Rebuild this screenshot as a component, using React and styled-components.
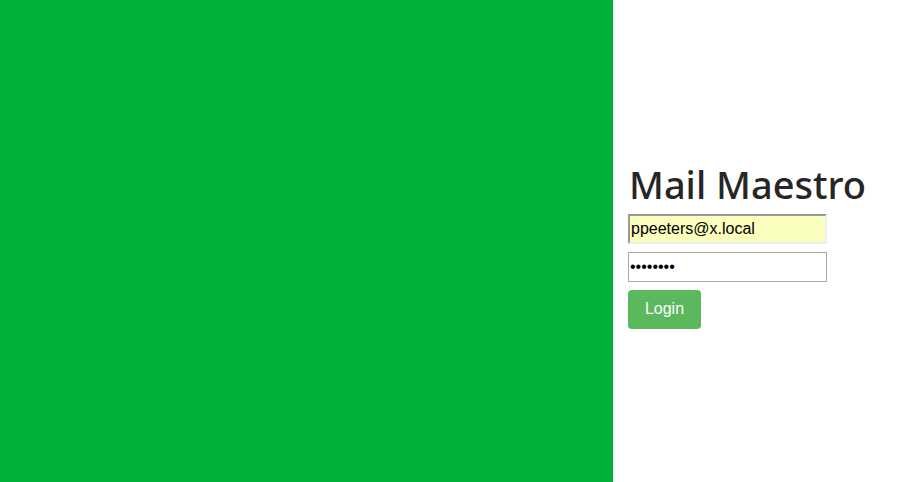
import React, { useState } from 'react'
import styled, { createGlobalStyle } from 'styled-components'

const GlobalStyle = createGlobalStyle`
  html, body {
    margin: 0;
    padding: 0;
    height: 100%;
  }
  #root {
    height: 100%;
  }
`

const App = () => {
  const [email, setEmail] = useState('ppeeters@x.local')
  const [password, setPassword] = useState('secret12')

  return (
    <>
      <GlobalStyle />
      <Page>
        <Banner />
        <Side>
          <LoginForm onSubmit={e => e.preventDefault()}>
            <Title>Mail Maestro</Title>
            <Field
              type='email'
              autofilled
              value={email}
              onChange={e => setEmail(e.target.value)}
            />
            <Field
              type='password'
              value={password}
              onChange={e => setPassword(e.target.value)}
            />
            <LoginButton type='submit'>Login</LoginButton>
          </LoginForm>
        </Side>
      </Page>
    </>
  )
}

const Page = styled.div`
  display: flex;
  height: 482px;
  width: 100%;
  background: #fff;
`
const Banner = styled.div`
  width: 613px;
  flex-shrink: 0;
  background: #00b139;
`
const Side = styled.div`
  flex: 1;
  display: flex;
  align-items: center;
  padding: 6px 0 0 15px;
`
const LoginForm = styled.form`
  display: flex;
  flex-direction: column;
  align-items: flex-start;
`
const Title = styled.h1`
  margin: 0 0 6px 1px;
  font-family: "Noto Sans", "Open Sans", sans-serif;
  font-weight: 500;
  font-size: 38px;
  line-height: 48px;
  color: #262626;
`
const Field = styled.input`
  box-sizing: border-box;
  width: 199px;
  height: 30px;
  margin: 0 0 8px 0;
  padding: 1px 1px;
  font-family: "Liberation Sans", Arial, sans-serif;
  font-size: 16px;
  color: #000;
  outline: none;
  background: ${props => props.autofilled ? 'rgb(250, 255, 189)' : '#fff'};
  border-style: solid;
  border-width: ${props => props.autofilled ? '2px' : '1px'};
  border-color: ${props => props.autofilled
    ? '#999 #ededed #ededed #999'
    : '#a9a9a9'};
`
const LoginButton = styled.button`
  box-sizing: border-box;
  width: 73px;
  height: 39px;
  padding: 0;
  border: none;
  border-radius: 4px;
  background: #5cb85c;
  color: #fff;
  font-family: "Liberation Sans", Arial, sans-serif;
  font-size: 16px;
  cursor: pointer;
`

export default App
